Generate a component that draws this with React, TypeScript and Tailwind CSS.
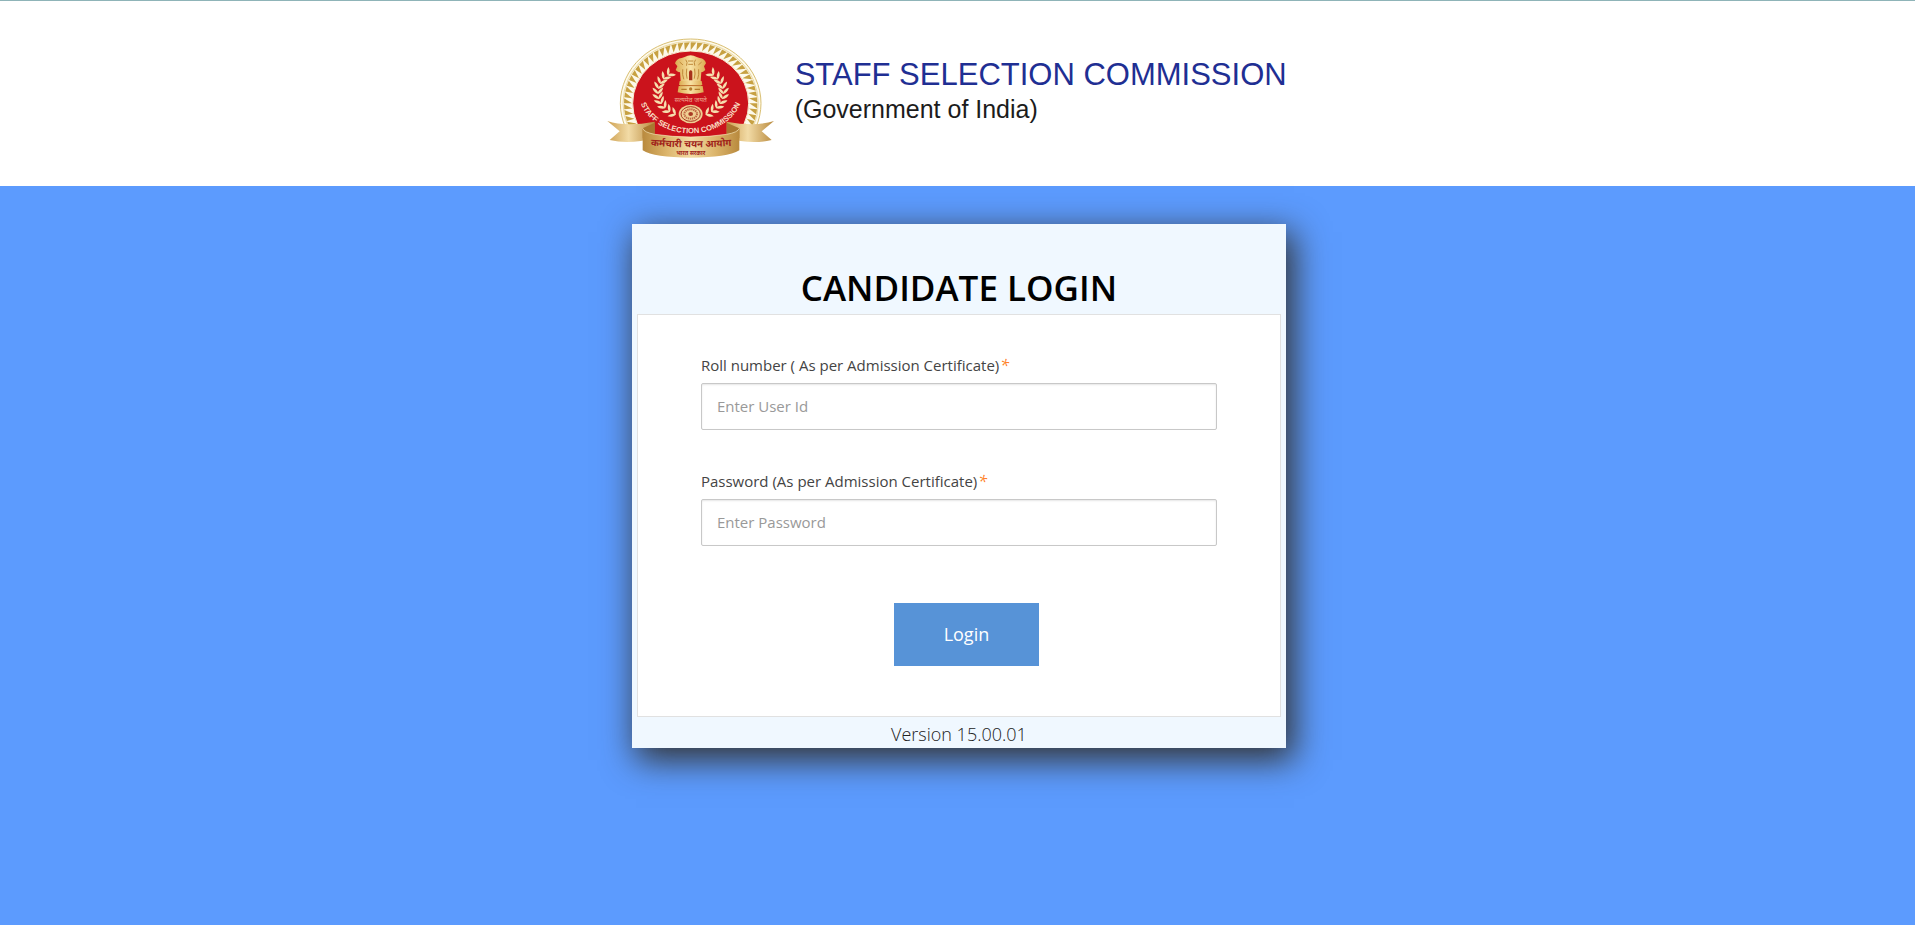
import { useState } from 'react';

export default function App() {
  return (
    <div className="flex min-h-screen flex-col bg-[#5c9bfe] font-['Open_Sans','Noto_Sans',sans-serif] text-[#444]">
      <Header />
      <main className="flex-1 pb-10 pt-[38px]">
        <LoginCard />
      </main>
    </div>
  );
}

function Header() {
  return (
    <header className="flex items-start gap-[6px] border-t border-[#8fb4b8] bg-white pb-4 pl-[31%] pt-6 font-['Liberation_Sans',Arial,sans-serif]">
      <Emblem className="h-[145px] w-[195px] shrink-0" />
      <div className="pt-8 whitespace-nowrap">
        <p className="text-[31px] leading-9 text-[#1f2f93]">STAFF SELECTION COMMISSION</p>
        <p className="text-[25px] leading-8 text-[#1c1c1c]">(Government of India)</p>
      </div>
    </header>
  );
}

function LoginCard() {
  const [userId, setUserId] = useState('');
  const [password, setPassword] = useState('');

  return (
    <section className="ml-[33%] w-[654px] bg-[#f0f8ff] px-[5px] pt-[38px] shadow-[6px_10px_32px_2px_#333]">
      <h1 className="text-center text-[35px] font-semibold leading-[52px] text-black">CANDIDATE LOGIN</h1>
      <form
        onSubmit={(e) => e.preventDefault()}
        className="flex flex-col border border-[#e1e1e1] bg-white px-[63px] pb-[50px] pt-[38px]"
      >
        <Field
          id="user-id"
          label="Roll number ( As per Admission Certificate)"
          type="text"
          placeholder="Enter User Id"
          value={userId}
          onChange={setUserId}
        />
        <Field
          id="password"
          label="Password (As per Admission Certificate)"
          type="password"
          placeholder="Enter Password"
          value={password}
          onChange={setPassword}
        />
        <button
          type="submit"
          className="ml-[193px] mt-[18px] h-[63px] w-[145px] bg-[#5793d7] pb-0.5 text-lg text-white hover:bg-[#4a86ca]"
        >
          Login
        </button>
      </form>
      <p className="pt-1 text-center text-lg font-light leading-[27px] text-[#222]">Version 15.00.01</p>
    </section>
  );
}

function Field({
  id,
  label,
  type,
  placeholder,
  value,
  onChange,
}: {
  id: string;
  label: string;
  type: string;
  placeholder: string;
  value: string;
  onChange: (value: string) => void;
}) {
  return (
    <div className="mb-[39px]">
      <label htmlFor={id} className="mb-1.5 block text-[15px] leading-6">
        {label}
        <em className="pl-px text-base font-medium leading-none text-[#ff7f27]">*</em>
      </label>
      <input
        id={id}
        type={type}
        placeholder={placeholder}
        value={value}
        onChange={(e) => onChange(e.target.value)}
        className="block h-[47px] w-full rounded-xs border border-[#c8c8c8] bg-white px-[15px] pb-0.5 text-[15px] shadow-[inset_0_1px_2px_rgba(0,0,0,0.1)] outline-none placeholder:text-[#999] focus:border-[#5793d7]"
      />
    </div>
  );
}

// ============================================================
// Emblem
// ============================================================
const CX = 290;
const CY = 235;

// Saw-tooth ring between the red disc and the outer gold line.
const TEETH = Array.from({ length: 64 }, (_, i) => {
  const a = (i / 64) * Math.PI * 2;
  const b = a + 0.085;
  const pt = (t: number, rx: number, ry: number) =>
    `${(CX + Math.cos(t) * rx).toFixed(1)},${(CY + Math.sin(t) * ry).toFixed(1)}`;
  return `${pt(a, 200, 183)} ${pt(b, 200, 183)} ${pt(a, 176, 159)}`;
});

// Laurel leaves run in pairs along an arc; the right branch is the same one mirrored.
const LEAVES = Array.from({ length: 10 }, (_, i) => {
  const deg = 226 - i * 12;
  const t = (deg * Math.PI) / 180;
  return { x: CX + Math.cos(t) * 98, y: 203 + Math.sin(t) * 74, deg: deg + 180 };
});

function Branch() {
  return (
    <g fill="#f6dfae">
      {LEAVES.map(({ x, y, deg }) => (
        <g key={deg} transform={`translate(${x.toFixed(1)} ${y.toFixed(1)}) rotate(${deg})`}>
          <path d="M0 2C-6 -6 -5 -16 0 -24C5 -16 6 -6 0 2Z" transform="rotate(42)" />
          <path d="M0 2C-6 -6 -5 -16 0 -24C5 -16 6 -6 0 2Z" transform="rotate(-42)" />
        </g>
      ))}
    </g>
  );
}

function Emblem({ className }: { className?: string }) {
  return (
    <svg viewBox="0 0 585 435" className={className} role="img" aria-label="Staff Selection Commission emblem">
      <defs>
        <linearGradient id="ribbon" x1="0" x2="1">
          <stop offset="0" stopColor="#b98a3e" />
          <stop offset="0.25" stopColor="#dcb56c" />
          <stop offset="0.5" stopColor="#f3dca4" />
          <stop offset="0.75" stopColor="#dcb56c" />
          <stop offset="1" stopColor="#b98a3e" />
        </linearGradient>
        <linearGradient id="tail" x1="0" x2="1">
          <stop offset="0" stopColor="#cda052" />
          <stop offset="0.45" stopColor="#f2dba6" />
          <stop offset="1" stopColor="#b98a3e" />
        </linearGradient>
        <linearGradient id="capital" x1="0" x2="1">
          <stop offset="0" stopColor="#dcab50" />
          <stop offset="0.5" stopColor="#f8e2a4" />
          <stop offset="1" stopColor="#dcab50" />
        </linearGradient>
        <clipPath id="above-ribbon">
          <path d="M0 0H585V300H440V340H145V300H0Z" />
        </clipPath>
        <path id="motto-arc" d="M133 197A157 128 0 0 0 447 197" />
        <path id="ribbon-arc" d="M155 361Q290 373 428 361" />
      </defs>

      <g clipPath="url(#above-ribbon)">
        <ellipse cx={CX} cy={CY} rx="211" ry="193" fill="#fdf9ea" stroke="#d9bf72" strokeWidth="3" />
        <ellipse cx={CX} cy={CY} rx="203" ry="186" fill="none" stroke="#ead9a4" strokeWidth="3" />
        {TEETH.map((points) => (
          <polygon key={points} points={points} fill="#c7a142" />
        ))}
        <ellipse cx={CX} cy={CY} rx="174" ry="157" fill="#cb131c" stroke="#f8edcf" strokeWidth="3" />
        <path d="M145 300H440V340H145Z" fill="#cb131c" />
      </g>

      <Branch />
      <g transform="translate(580 0) scale(-1 1)">
        <Branch />
      </g>

      {/* Lion capital */}
      <g fill="url(#capital)">
        <path d="M272 96Q290 86 308 96L317 99Q333 101 336 115L330 124L334 135Q326 143 322 141L320 168H260L258 141Q252 143 245 135L250 124L243 115Q247 101 263 99Z" />
        <path d="M257 168H323L325 180H255Z" />
        <path d="M254 183H326L329 202Q290 212 251 202Z" />
      </g>
      <g fill="none" stroke="#c08a3a" strokeWidth="3" strokeLinecap="round">
        <path d="M276 105Q282 112 278 121M304 105Q298 112 302 121M283 108H297M284 118H296" />
        <path d="M258 112L266 119M322 112L314 119M266 134Q264 150 269 162M314 134Q316 150 311 162" />
        <path d="M278 132Q275 148 279 160M302 132Q305 148 301 160M259 182H321" />
      </g>
      <path d="M285 140Q290 132 295 140V166H285Z" fill="#a8321b" />
      <circle cx="290" cy="192" r="5" fill="#b47d2c" />
      <path d="M262 193H278M302 193H318" stroke="#b47d2c" strokeWidth="4" />

      <text x="290" y="230" textAnchor="middle" fontSize="20" fill="#f0a58f" className="font-['Noto_Sans',sans-serif]">
        सत्यमेव जयते
      </text>

      {/* Wheel */}
      <ellipse cx="290" cy="267" rx="41" ry="33" fill="#cb131c" />
      <ellipse cx="290" cy="267" rx="36" ry="28" fill="#efcf93" />
      <ellipse cx="290" cy="267" rx="29" ry="22" fill="none" stroke="#a93a25" strokeWidth="3" />
      <ellipse cx="290" cy="267" rx="19" ry="14" fill="none" stroke="#bf6542" strokeWidth="6" strokeDasharray="4 2" />
      <ellipse cx="290" cy="267" rx="7" ry="6" fill="#a93a25" />

      <text fontSize="23" fontWeight="700" fill="#f9dfc5" className="font-['Liberation_Sans',Arial,sans-serif]">
        <textPath href="#motto-arc" startOffset="50%" textAnchor="middle">
          STAFF SELECTION COMMISSION
        </textPath>
      </text>

      {/* Ribbon: tails, folds, then the front band */}
      <path d="M40 288Q95 306 182 290V338Q110 360 47 345L77 319Z" fill="url(#tail)" />
      <path d="M540 288Q485 306 398 290V338Q470 360 533 345L503 319Z" fill="url(#tail)" />
      <path d="M146 310L182 293V334L146 340Z" fill="#a97830" />
      <path d="M436 310L398 293V334L436 340Z" fill="#a97830" />
      <path d="M146 310Q150 322 182 328Q290 344 398 328Q432 322 436 310V376Q400 398 290 398T146 376Z" fill="url(#ribbon)" />
      <path d="M146 310Q150 322 182 328Q290 344 398 328Q432 322 436 310" fill="none" stroke="#f8e8bd" strokeWidth="2" />
      <text fontSize="29" fontWeight="700" fill="#a0241b" className="font-['Noto_Sans',sans-serif]">
        <textPath href="#ribbon-arc" startOffset="50%" textAnchor="middle">
          कर्मचारी चयन आयोग
        </textPath>
      </text>
      <text
        x="290"
        y="390"
        textAnchor="middle"
        fontSize="17"
        fontWeight="700"
        fill="#a0241b"
        className="font-['Noto_Sans',sans-serif]"
      >
        भारत सरकार
      </text>
    </svg>
  );
}
